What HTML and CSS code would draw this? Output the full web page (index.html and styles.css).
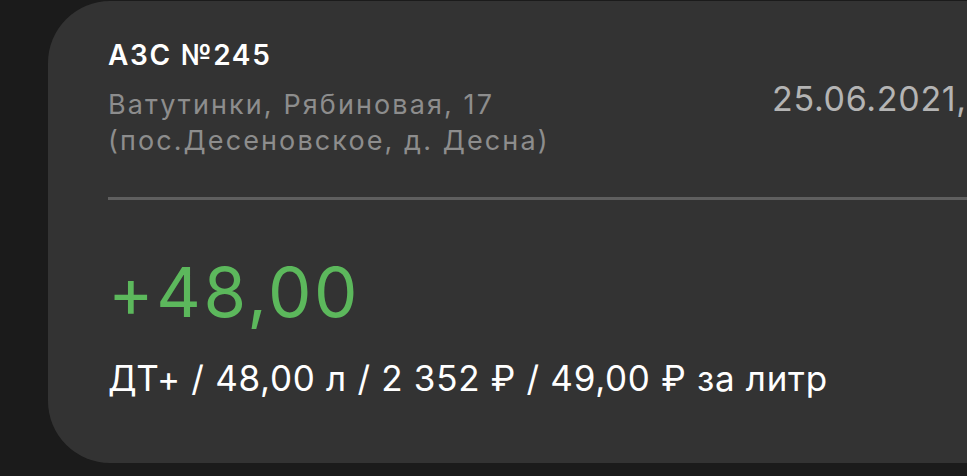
FILE: index.html
```html
<!DOCTYPE html>
<html lang="ru">
<head>
<meta charset="utf-8">
<link rel="stylesheet" href="styles.css">
</head>
<body>
<div class="card">
  <div class="head">
    <div class="place">
      <div class="title">АЗС №245</div>
      <div class="address">Ватутинки, Рябиновая, 17<br>(пос.Десеновское, д. Десна)</div>
    </div>
    <div class="date">25.06.2021,</div>
  </div>
  <div class="divider"></div>
  <div class="amount">+48,00</div>
  <div class="details">ДТ+ / 48,00 л / 2 352 ₽ / 49,00 ₽ за литр</div>
</div>
</body>
</html>
```
FILE: styles.css
```css
html, body {
  margin: 0;
  padding: 0;
  background: #1b1b1b;
  overflow: hidden;
  width: 967px;
  height: 476px;
}
body {
  font-family: Inter, "Noto Sans", sans-serif;
}
.card {
  margin: 1px 0 0 48px;
  width: 1000px;
  height: 462px;
  box-sizing: border-box;
  background: #333333;
  border-radius: 62px 0 0 62px;
  padding: 36px 0 0 60px;
}
.head {
  display: grid;
  grid-template-columns: 664px auto;
  white-space: nowrap;
}
.title {
  font-size: 28px;
  font-weight: 600;
  line-height: 36px;
  letter-spacing: 1.7px;
  color: #ffffff;
}
.address {
  margin-top: 14px;
  font-size: 27px;
  line-height: 36px;
  letter-spacing: 2.1px;
  color: #8d8d8d;
}
.date {
  margin-top: 42px;
  font-size: 34px;
  line-height: 40px;
  letter-spacing: 0.7px;
  color: #b4b4b4;
}
.divider {
  margin-top: 38px;
  height: 3px;
  background: #5f5f5f;
}
.amount {
  margin-top: 52px;
  font-size: 69px;
  line-height: 80px;
  letter-spacing: 2.6px;
  color: #5cb85c;
}
.details {
  margin-top: 24px;
  font-size: 35px;
  line-height: 44px;
  letter-spacing: 0.7px;
  color: #ffffff;
  white-space: nowrap;
}
```
